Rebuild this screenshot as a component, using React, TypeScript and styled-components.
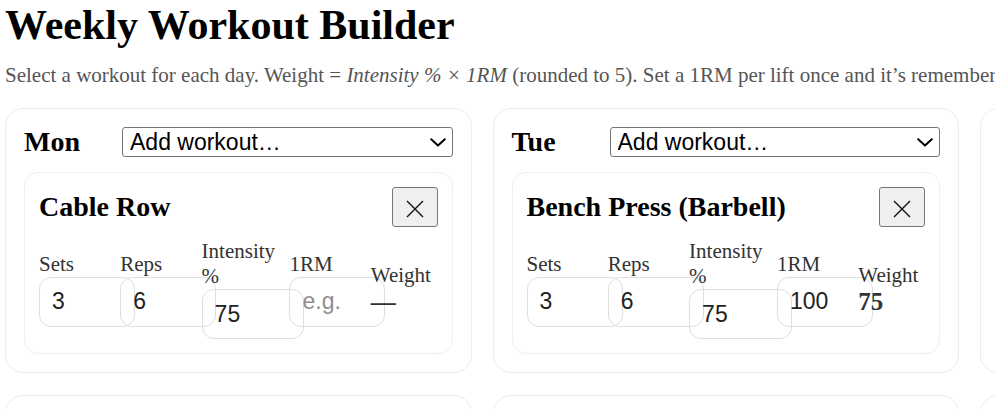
import React, { useState } from "react";
import styled, { createGlobalStyle } from "styled-components";

type Entry = { id: number; lift: string; sets: string; reps: string; intensity: string };

const LIFTS = [
  "Bench Press (Barbell)",
  "Cable Row",
  "Squat (Barbell)",
  "Deadlift (Barbell)",
  "Overhead Press",
  "Lat Pulldown",
  "Romanian Deadlift",
  "Pull-Up",
];

const DAYS = ["Mon", "Tue", "Wed", "Thu", "Fri", "Sat", "Sun"];

const GlobalStyle = createGlobalStyle`
  html, body {
    margin: 0;
    padding: 0;
    background: #ffffff;
    overflow: hidden;
  }
  body {
    font-family: "Liberation Serif", "Times New Roman", serif;
    font-size: 21px;
    color: #000;
  }
`;

const Page = styled.div`
  width: 1442px;
  padding: 1px 5px 40px;
`;

const Title = styled.h1`
  margin: 0 0 14px;
  font-size: 42px;
  font-weight: 700;
  line-height: normal;
`;

const Subtitle = styled.p`
  margin: 0 0 20px;
  color: #555;
  white-space: nowrap;
`;

const DayGrid = styled.div`
  display: grid;
  grid-template-columns: repeat(3, 466.5px);
  column-gap: 21px;
  row-gap: 22px;
`;

const DayCard = styled.section`
  border: 1px solid #ececec;
  border-radius: 18px;
  padding: 18px;
  display: flex;
  flex-direction: column;
  gap: 15px;
`;

const DayHeader = styled.div`
  display: grid;
  grid-template-columns: 86px 1fr;
  column-gap: 12px;
  align-items: center;
`;

const DayName = styled.h2`
  margin: 0;
  font-size: 28px;
  line-height: 30px;
  font-weight: 700;
`;

const SelectWrap = styled.div`
  position: relative;
  height: 30px;
`;

const WorkoutSelect = styled.select`
  appearance: none;
  -webkit-appearance: none;
  box-sizing: border-box;
  display: block;
  width: 100%;
  height: 30px;
  margin: 0;
  padding: 0 30px 0 7px;
  border: 1px solid #767676;
  border-radius: 3px;
  background: #fff;
  font-family: "Liberation Sans", Arial, sans-serif;
  font-size: 23px;
  color: #000;
  outline: none;
`;

const Chevron = styled.svg`
  position: absolute;
  right: 7px;
  top: 11px;
  pointer-events: none;
`;

const ExerciseCard = styled.article`
  border: 1px solid #efefef;
  border-radius: 14px;
  padding: 14px;
  display: flex;
  flex-direction: column;
  gap: 12px;
`;

const ExerciseHeader = styled.div`
  display: flex;
  align-items: center;
  justify-content: space-between;
`;

const ExerciseName = styled.h3`
  margin: 0;
  font-size: 28px;
  font-weight: 700;
`;

const RemoveButton = styled.button`
  width: 46px;
  height: 40px;
  padding: 4px 0 0;
  margin: 0;
  display: flex;
  align-items: center;
  justify-content: center;
  background: #efefef;
  border: 1px solid #767676;
  border-radius: 3px;
  color: #000;
  cursor: pointer;
`;

const FieldRow = styled.div`
  display: grid;
  grid-template-columns: 70px 70px 76.6px 70px 1fr;
  column-gap: 11.3px;
  align-items: center;
`;

const Field = styled.label`
  display: flex;
  flex-direction: column;
  color: #333;
`;

const StaticField = styled.div`
  display: flex;
  flex-direction: column;
  color: #333;
`;

const FieldLabel = styled.span`
  display: block;
`;

const NumberInput = styled.input`
  box-sizing: content-box;
  width: 100%;
  height: 26px;
  padding: 11px 12px;
  margin: 0;
  border: 1px solid #dedede;
  border-radius: 12px;
  background: transparent;
  font-family: "Liberation Sans", Arial, sans-serif;
  font-size: 23px;
  color: #222;
  outline: none;

  &::placeholder {
    color: #8f8f8f;
  }
  &::-webkit-inner-spin-button,
  &::-webkit-outer-spin-button {
    -webkit-appearance: none;
    margin: 0;
  }
`;

const WeightValue = styled.div`
  font-size: 25px;
  font-weight: 700;
  color: #333;
`;

const XIcon = () => (
  <svg width="18" height="18" viewBox="0 0 18 18" aria-hidden="true">
    <path d="M1 1 L17 17 M17 1 L1 17" stroke="#111" strokeWidth="1.4" fill="none" />
  </svg>
);

function computeWeight(intensity: string, rm: string): string {
  const i = parseFloat(intensity);
  const r = parseFloat(rm);
  if (!isFinite(i) || !isFinite(r) || r <= 0) return "—";
  return String(Math.round(((i / 100) * r) / 5) * 5);
}

export default function App() {
  const [plan, setPlan] = useState<Record<string, Entry[]>>({
    Mon: [{ id: 1, lift: "Cable Row", sets: "3", reps: "6", intensity: "75" }],
    Tue: [{ id: 2, lift: "Bench Press (Barbell)", sets: "3", reps: "6", intensity: "75" }],
    Wed: [],
    Thu: [],
    Fri: [],
    Sat: [],
    Sun: [],
  });
  const [oneRm, setOneRm] = useState<Record<string, string>>({
    "Bench Press (Barbell)": "100",
  });
  const [nextId, setNextId] = useState(3);

  const addWorkout = (day: string, lift: string) => {
    if (!lift) return;
    setPlan((p) => ({
      ...p,
      [day]: [...p[day], { id: nextId, lift, sets: "3", reps: "8", intensity: "70" }],
    }));
    setNextId((n) => n + 1);
  };

  const updateEntry = (day: string, id: number, key: keyof Entry, value: string) => {
    setPlan((p) => ({
      ...p,
      [day]: p[day].map((e) => (e.id === id ? { ...e, [key]: value } : e)),
    }));
  };

  const removeEntry = (day: string, id: number) => {
    setPlan((p) => ({ ...p, [day]: p[day].filter((e) => e.id !== id) }));
  };

  return (
    <Page>
      <GlobalStyle />
      <Title>Weekly Workout Builder</Title>
      <Subtitle>
        Select a workout for each day. Weight = <em>Intensity % × 1RM</em> (rounded to 5). Set a
        1RM per lift once and it’s remembered across days.
      </Subtitle>
      <DayGrid>
        {DAYS.map((day) => (
          <DayCard key={day}>
            <DayHeader>
              <DayName>{day}</DayName>
              <SelectWrap>
                <WorkoutSelect value="" onChange={(e) => addWorkout(day, e.target.value)}>
                  <option value="">Add workout…</option>
                  {LIFTS.map((l) => (
                    <option key={l} value={l}>
                      {l}
                    </option>
                  ))}
                </WorkoutSelect>
                <Chevron width="16" height="9" viewBox="0 0 16 9" aria-hidden="true">
                  <path
                    d="M1.2 1.2 L8 7.6 L14.8 1.2"
                    stroke="#000"
                    strokeWidth="2"
                    fill="none"
                    strokeLinecap="round"
                    strokeLinejoin="round"
                  />
                </Chevron>
              </SelectWrap>
            </DayHeader>
            {plan[day].map((entry) => (
              <ExerciseCard key={entry.id}>
                <ExerciseHeader>
                  <ExerciseName>{entry.lift}</ExerciseName>
                  <RemoveButton aria-label="Remove" onClick={() => removeEntry(day, entry.id)}>
                    <XIcon />
                  </RemoveButton>
                </ExerciseHeader>
                <FieldRow>
                  <Field>
                    <FieldLabel>Sets</FieldLabel>
                    <NumberInput
                      type="number"
                      value={entry.sets}
                      onChange={(e) => updateEntry(day, entry.id, "sets", e.target.value)}
                    />
                  </Field>
                  <Field>
                    <FieldLabel>Reps</FieldLabel>
                    <NumberInput
                      type="number"
                      value={entry.reps}
                      onChange={(e) => updateEntry(day, entry.id, "reps", e.target.value)}
                    />
                  </Field>
                  <Field>
                    <FieldLabel>Intensity %</FieldLabel>
                    <NumberInput
                      type="number"
                      value={entry.intensity}
                      onChange={(e) => updateEntry(day, entry.id, "intensity", e.target.value)}
                    />
                  </Field>
                  <Field>
                    <FieldLabel>1RM</FieldLabel>
                    <NumberInput
                      type="number"
                      placeholder="e.g."
                      value={oneRm[entry.lift] ?? ""}
                      onChange={(e) =>
                        setOneRm((r) => ({ ...r, [entry.lift]: e.target.value }))
                      }
                    />
                  </Field>
                  <StaticField>
                    <FieldLabel>Weight</FieldLabel>
                    <WeightValue>
                      {computeWeight(entry.intensity, oneRm[entry.lift] ?? "")}
                    </WeightValue>
                  </StaticField>
                </FieldRow>
              </ExerciseCard>
            ))}
          </DayCard>
        ))}
      </DayGrid>
    </Page>
  );
}
